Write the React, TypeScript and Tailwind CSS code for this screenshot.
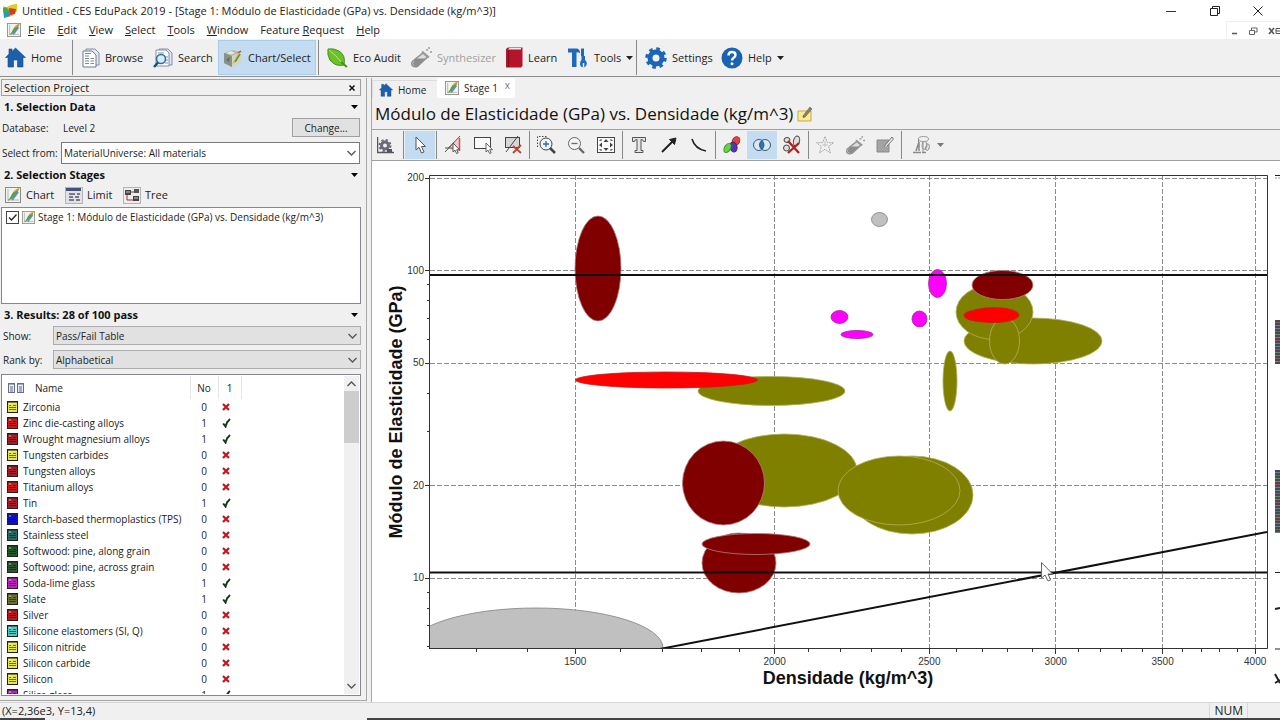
import type { ReactNode } from 'react';
import clsx from 'clsx';

const materials = [
  { name: 'Zirconia', color: '#e6e64a', pass: false },
  { name: 'Zinc die-casting alloys', color: '#d01818', pass: true },
  { name: 'Wrought magnesium alloys', color: '#a81c28', pass: true },
  { name: 'Tungsten carbides', color: '#e6e64a', pass: false },
  { name: 'Tungsten alloys', color: '#a81c28', pass: false },
  { name: 'Titanium alloys', color: '#d01818', pass: false },
  { name: 'Tin', color: '#a81c28', pass: true },
  { name: 'Starch-based thermoplastics (TPS)', color: '#1010c8', pass: false },
  { name: 'Stainless steel', color: '#2a6a60', pass: false },
  { name: 'Softwood: pine, along grain', color: '#1f5a22', pass: false },
  { name: 'Softwood: pine, across grain', color: '#2c5630', pass: false },
  { name: 'Soda-lime glass', color: '#c020c0', pass: true },
  { name: 'Slate', color: '#6c7030', pass: true },
  { name: 'Silver', color: '#c01818', pass: false },
  { name: 'Silicone elastomers (SI, Q)', color: '#50c8c0', pass: false },
  { name: 'Silicon nitride', color: '#e6e64a', pass: false },
  { name: 'Silicon carbide', color: '#e6e64a', pass: false },
  { name: 'Silicon', color: '#e6e64a', pass: false },
  { name: 'Silica glass', color: '#c020c0', pass: true },
];

const menus = [
  ['', 'F', 'ile'],
  ['', 'E', 'dit'],
  ['', 'V', 'iew'],
  ['', 'S', 'elect'],
  ['', 'T', 'ools'],
  ['', 'W', 'indow'],
  ['Feature ', 'R', 'equest'],
  ['', 'H', 'elp'],
];

/* ---------- icons ---------- */

const AppIcon = () => (
  <svg width="16" height="16" viewBox="0 0 16 16">
    <path d="M1 3Q4 5 7 3L15 1L15 8L10 13L2 15L1 10Z" fill="#e8c52c" />
    <path d="M8 2L15 1Q16 5 13 8L8 7Z" fill="#d8d028" />
    <path d="M1 5Q4 3 6 6L9 8L5 11L1 9Z" fill="#4ca64a" />
    <path d="M7 5L14 6L13 11L8 12Z" fill="#d63a20" />
    <path d="M2 9L8 9L8 13L2 15Z" fill="#2a9bb0" />
  </svg>
);

const ChartIcon = ({ size = 14 }: { size?: number }) => (
  <svg width={size} height={size} viewBox="0 0 16 16">
    <rect x="0.5" y="0.5" width="15" height="15" fill="#f2f2ee" stroke="#8a8a8a" />
    <path d="M3 2V13H14" stroke="#b8b8b8" fill="none" />
    <path d="M2 14Q5 12 7 7Q10 2 14 2Q13 6 10 9Q6 13 2 14Z" fill="#59a03c" />
    <path d="M7 13L13 5" stroke="#5b8fc0" strokeWidth="2" />
    <path d="M9 5L14 1" stroke="#e5a03a" strokeWidth="1.5" />
  </svg>
);

const HomeIcon = ({ size = 21 }: { size?: number }) => (
  <svg width={size} height={size} viewBox="0 0 21 21">
    <path d="M10.5 1L20.5 10.5H18V20H12.5V13H8.5V20H3V10.5H0.5L4 7V2H7V4.5Z" fill="#1c5fae" stroke="#174a88" strokeWidth="0.6" />
  </svg>
);

const BrowseIcon = () => (
  <svg width="18" height="20" viewBox="0 0 18 20">
    <path d="M4 1H13L17 5V17H4Z" fill="#e4e8f0" stroke="#8290a8" />
    <path d="M1 3H10L14 7V19H1Z" fill="#fff" stroke="#6d7a90" />
    <path d="M3 8H7M3 10.5H7M3 13H7M3 15.5H7M8.5 10.5H12M8.5 13H12M8.5 15.5H12M3 5.5H9" stroke="#7a869a" />
  </svg>
);

const SearchIcon = () => (
  <svg width="20" height="20" viewBox="0 0 20 20">
    <path d="M6 1H15L19 5V17H6Z" fill="#dfe4ee" stroke="#8290a8" />
    <path d="M3 2H13L16 5V18H3Z" fill="#fff" stroke="#8290a8" />
    <path d="M5 5H11M12 9H15M12 12H15M12 15H15" stroke="#8290a8" />
    <circle cx="8" cy="11" r="4.5" fill="#dcecf8" stroke="#2a6fb0" strokeWidth="1.6" />
    <path d="M5 14.5L1 19" stroke="#1a4f88" strokeWidth="2.5" />
  </svg>
);

const ChartSelectIcon = () => (
  <svg width="20" height="20" viewBox="0 0 20 20">
    <path d="M1 5L9 2L18 4L17 15L9 19L1 15Z" fill="#b4b8ac" />
    <path d="M1 5L9 8V19L1 15Z" fill="#8b918a" />
    <path d="M9 8L18 4V15L9 19Z" fill="#d4d6c4" />
    <path d="M3 12L7 9L6 14Z" fill="#527a52" />
    <path d="M10 16L15 6" stroke="#e0c440" strokeWidth="1.6" fill="none" />
    <path d="M12 14L17 6" stroke="#5c9450" strokeWidth="1.6" />
    <path d="M3 5L8 3L12 5L8 6.5Z" fill="#e6e8e0" />
    <path d="M15 5L18 3" stroke="#b84a36" strokeWidth="1.5" />
  </svg>
);

const LeafIcon = () => (
  <svg width="21" height="21" viewBox="0 0 21 21">
    <path d="M1 2Q7 1 12 4Q19 8 17 18Q8 20 3 13Q0 8 1 2Z" fill="#6cc02a" stroke="#46911c" />
    <path d="M2 3Q9 8 15 16" stroke="#b6e67a" fill="none" />
    <path d="M14 15L20 20" stroke="#46911c" strokeWidth="2" />
  </svg>
);

const TubeIcon = ({ size = 21 }: { size?: number }) => (
  <svg width={size} height={size} viewBox="0 0 21 21">
    <path d="M12 6L16.5 10L7 19Q3 21 1 18Q0 15 3 13Z" fill="#dedede" stroke="#8e8e8e" strokeWidth="1.5" />
    <path d="M5 11.5H14.5L7 18.5Q3 20 2 17Q2 14 5 11.5Z" fill="#8c8c8c" />
    <path d="M11 4.5L18 10.5" stroke="#9a9a9a" strokeWidth="2" />
    <path d="M15 3H17M19 5H21M18 0V2" stroke="#9a9a9a" strokeWidth="1.5" />
  </svg>
);

const BookIcon = () => (
  <svg width="18" height="21" viewBox="0 0 18 21">
    <path d="M1 2L3 0.5H17.5V19L16 20.5H1Z" fill="#b5152b" />
    <path d="M3 2.5L4.5 1H16V2.5Z" fill="#f5e8e8" />
    <path d="M3.5 3V20" stroke="#7d0d1c" />
  </svg>
);

const ToolsIcon = () => (
  <svg width="21" height="21" viewBox="0 0 21 21">
    <path d="M0 5.5V1.5H9Q12 2 12 6.5Q10 4.5 8.5 5.5V20H4V5.5Z" fill="#1f6ab8" />
    <path d="M13 1.5H16V9H17V13Q19.5 15 18.5 18Q17 20.5 15.5 20.5Q12 20 12 17Q12 14 13.5 13V9H13Z" fill="#1f6ab8" />
    <path d="M15.5 16V20.5" stroke="#f0f0f0" strokeWidth="1.5" />
  </svg>
);

const GearIcon = () => (
  <svg width="22" height="22" viewBox="0 0 22 22">
    <circle cx="11" cy="11" r="6" fill="none" stroke="#1c66b5" strokeWidth="5" />
    <circle cx="11" cy="11" r="9" fill="none" stroke="#1c66b5" strokeWidth="3.5" strokeDasharray="3.5 3.57" />
  </svg>
);

const HelpIcon = () => (
  <svg width="22" height="22" viewBox="0 0 22 22">
    <circle cx="11" cy="11" r="10.5" fill="#1c62b3" />
    <path d="M7.5 8.5Q7.5 5 11 5Q14.5 5 14.5 8Q14.5 10 12.5 11Q11 12 11 13.5" fill="none" stroke="#fff" strokeWidth="2.4" />
    <circle cx="11" cy="16.8" r="1.5" fill="#fff" />
  </svg>
);

const LimitIcon = () => (
  <svg width="18" height="17" viewBox="0 0 18 17">
    <rect x="0.5" y="0.5" width="17" height="16" fill="#e2e2e6" stroke="#b4b4b8" />
    <rect x="1" y="1" width="15" height="3" fill="#46507e" />
    <path d="M4 7H10M12 7H15M4 10H8M10 10H14M4 13H9M11 13H15" stroke="#555a70" strokeWidth="1.5" />
  </svg>
);

const TreeIcon = () => (
  <svg width="18" height="17" viewBox="0 0 18 17">
    <rect x="0.5" y="0.5" width="17" height="16" fill="#ededed" stroke="#b4b4b8" />
    <rect x="2" y="3" width="6" height="5" fill="#444" />
    <rect x="11" y="2" width="5" height="4" fill="#555" />
    <rect x="10" y="9" width="6" height="5" fill="#444" />
    <path d="M8 5H11M4 8V13H10" stroke="#a03030" fill="none" />
    <path d="M3 5H7M11 11H15" stroke="#ccc" />
  </svg>
);

const NoteIcon = () => (
  <svg width="16" height="16" viewBox="0 0 16 16">
    <path d="M1 5H14V15H1Z" fill="#f9ec98" stroke="#c8a93a" />
    <path d="M6 10L13 1L15 3L8 11L6 11.5Z" fill="#8c8468" stroke="#5a5240" strokeWidth="0.6" />
  </svg>
);

const PageIcon = () => (
  <svg width="7" height="10" viewBox="0 0 7 10">
    <rect x="0.5" y="0.5" width="6" height="9" fill="#e8ecf6" stroke="#666c84" />
    <path d="M0 1H7M2 4H5M2 6H5M2 8H5" stroke="#666c84" />
  </svg>
);

const RecordIcon = ({ color }: { color: string }) => (
  <svg width="11" height="12" viewBox="0 0 11 12" className="block shrink-0">
    <rect x="0.5" y="0.5" width="10" height="11" fill={color} stroke="#20201c" />
    <path d="M0 1H11" stroke="#20201c" />
    <path d="M2 4.5H4M6 4.5H9M2 6.5H9M2 8.5H9" stroke="#151515" strokeOpacity="0.6" />
    <path d="M2 3H4" stroke="#fff" strokeOpacity="0.7" />
  </svg>
);

const CheckMark = () => (
  <svg width="9" height="10" viewBox="0 0 9 10" className="block">
    <path d="M1.2 5.5L3.5 8.5Q4.5 4 8 1" fill="none" stroke="#153a1c" strokeWidth="2" />
  </svg>
);

const CrossMark = () => (
  <svg width="8" height="8" viewBox="0 0 8 8" className="block">
    <path d="M1 1L7 7M7 1L1 7" stroke="#c01824" strokeWidth="2.3" />
  </svg>
);

const Caret = ({ color = '#222' }: { color?: string }) => (
  <svg width="7" height="4" viewBox="0 0 7 4">
    <path d="M0 0H7L3.5 4Z" fill={color} />
  </svg>
);

const Chevron = ({ flip = false }: { flip?: boolean }) => (
  <svg width="9" height="6" viewBox="0 0 9 6" className={flip ? 'rotate-180' : ''}>
    <path d="M0.5 1L4.5 5L8.5 1" fill="none" stroke="#555" strokeWidth="1.3" />
  </svg>
);

/* ---------- chart toolbar glyphs, all on a 20px grid ---------- */

const Glyph = ({ children }: { children: ReactNode }) => (
  <svg width="20" height="20" viewBox="0 0 20 20" fill="none" stroke="#444">
    {children}
  </svg>
);

const pointer = 'M0 0V9L2 7.2L3.6 10.5L5.2 9.8L3.7 6.7H6.5Z';

const glyphs: Record<string, ReactNode> = {
  properties: (
    <Glyph>
      <path d="M0.5 2V17.5H17" stroke="#55555f" strokeWidth="1.5" />
      <circle cx="8" cy="10.5" r="3.5" stroke="#6a6a78" strokeWidth="3" />
      <circle cx="8" cy="10.5" r="5.5" stroke="#6a6a78" strokeWidth="2" strokeDasharray="2.2 2.12" />
      <path d="M10 17V14H15V17Z" fill="#55555f" stroke="none" />
    </Glyph>
  ),
  pointer: (
    <Glyph>
      <path d="M6 2V15L9 12.3L11.5 18L14 17L11.5 11.5H15.5Z" fill="#fff" stroke="#555" />
    </Glyph>
  ),
  gradient: (
    <Glyph>
      <path d="M4 13L16 3V17Z" fill="#f5c8cc" stroke="none" />
      <path d="M16.5 3V16" stroke="#d05060" strokeWidth="1.5" />
      <path d="M2 17L17 1M2 13H10" stroke="#555" />
      <path d="M5 13L12 6" stroke="#d05060" />
      <g transform="translate(10 8)"><path d={pointer} fill="#fff" stroke="#555" /></g>
    </Glyph>
  ),
  box: (
    <Glyph>
      <rect x="1.5" y="2.5" width="16" height="11" fill="#fafafa" />
      <g transform="translate(13 8)"><path d={pointer} fill="#fff" stroke="#555" strokeWidth="0.9" /></g>
    </Glyph>
  ),
  removeBox: (
    <Glyph>
      <rect x="2.5" y="2.5" width="14" height="10" fill="#d6d6d6" />
      <path d="M3 17L15 1" />
      <path d="M10 11L18 18M18 10L10 18" stroke="#b04a38" strokeWidth="1.8" />
    </Glyph>
  ),
  zoomIn: (
    <Glyph>
      <path d="M1.5 12V1.5H12" strokeDasharray="1.5 1.5" />
      <circle cx="10" cy="9" r="6" fill="#eef4f8" />
      <path d="M7 9H13M10 6V12" stroke="#2870a0" strokeWidth="1.3" />
      <path d="M14 13L19 18" strokeWidth="2.5" />
    </Glyph>
  ),
  zoomOut: (
    <Glyph>
      <circle cx="8.5" cy="8.5" r="6" fill="#f4f4f4" stroke="#666" />
      <path d="M5.5 8.5H11.5" stroke="#a05060" strokeWidth="1.3" />
      <path d="M13 13L18 18" stroke="#666" strokeWidth="2.3" />
    </Glyph>
  ),
  fit: (
    <Glyph>
      <rect x="1.5" y="2.5" width="17" height="15" fill="#fafafa" />
      <path d="M10 4L12.5 7H7.5ZM10 16L12.5 13H7.5ZM3 10L6 7.5V12.5ZM17 10L14 7.5V12.5Z" fill="#444" stroke="none" />
      <path d="M4 6V5H6M14 5H16V6M4 14V15H6M14 15H16V14" />
    </Glyph>
  ),
  text: (
    <Glyph>
      <path d="M3.5 2.5H16.5V6.5H14.5Q14.5 4.5 12 4.5V15.5H14V17.5H6V15.5H8V4.5Q5.5 4.5 5.5 6.5H3.5Z" fill="#e4e4e4" stroke="#555" />
    </Glyph>
  ),
  arrow: (
    <Glyph>
      <path d="M3 17L13 7" stroke="#222" strokeWidth="2" />
      <path d="M17 3L15.5 9.5L10.5 4.5Z" fill="#222" stroke="#222" />
    </Glyph>
  ),
  curve: (
    <Glyph>
      <path d="M3 4Q6 14 17 16" stroke="#222" strokeWidth="1.6" />
    </Glyph>
  ),
  families: (
    <Glyph>
      <ellipse cx="14" cy="6" rx="3.5" ry="4.5" fill="#e8403c" stroke="#a03030" transform="rotate(30 14 6)" />
      <ellipse cx="11.5" cy="12" rx="3.5" ry="5" fill="#5238b0" stroke="#38287a" transform="rotate(-15 11.5 12)" />
      <ellipse cx="5.5" cy="13" rx="3" ry="5" fill="#62d648" stroke="#3c8c30" transform="rotate(30 5.5 13)" />
    </Glyph>
  ),
  intersect: (
    <Glyph>
      <circle cx="7" cy="10" r="5.5" fill="#d8e8f6" stroke="#44586c" />
      <circle cx="13" cy="10" r="5.5" fill="#d8e8f6" stroke="#44586c" />
      <path d="M10 5.4Q14 10 10 14.6Q6 10 10 5.4Z" fill="#2a78b4" stroke="#23608f" />
    </Glyph>
  ),
  hideFailed: (
    <Glyph>
      <ellipse cx="5" cy="5" rx="3" ry="2.5" fill="#ddd" />
      <ellipse cx="4.5" cy="13" rx="3" ry="3" fill="#ddd" />
      <ellipse cx="14.5" cy="6" rx="3" ry="5" fill="#ddd" transform="rotate(15 14.5 6)" />
      <path d="M6 6L17 18M17 8L6 18" stroke="#b02020" strokeWidth="2.3" />
    </Glyph>
  ),
  star: (
    <Glyph>
      <path d="M10 1.5L12.3 7.7H18.5L13.6 11.5L15.5 18L10 14.2L4.5 18L6.4 11.5L1.5 7.7H7.7Z" stroke="#aaa" strokeDasharray="2 0.7" fill="#f2f2f2" />
      <path d="M10 6V12M7 10H13" stroke="#c2c2c2" />
    </Glyph>
  ),
  tube: <TubeIcon size={19} />,
  edit: (
    <Glyph>
      <path d="M2 5H14V17H2Z" fill="#a4a4a4" stroke="#8a8a8a" />
      <path d="M9 12L12 8L17 2L18.5 4L12 11" fill="#eee" stroke="#777" />
    </Glyph>
  ),
  report: (
    <Glyph>
      <path d="M4 16L7 7V16M1 17.5H9M10 17.5H14" stroke="#8a8a8a" strokeWidth="1.5" />
      <ellipse cx="11.5" cy="4" rx="5" ry="2.5" stroke="#999" />
      <path d="M6.5 4V8M11 7V17M15 9Q18 8 17 14Q15 17 13 14Z" stroke="#8a8a8a" />
      <ellipse cx="12.5" cy="10.5" rx="2.5" ry="4" stroke="#999" />
    </Glyph>
  ),
};

const glyphGroups: { id: string; label: string; active?: boolean }[][] = [
  [{ id: 'properties', label: 'Chart properties' }],
  [{ id: 'pointer', label: 'Pointer', active: true }],
  [
    { id: 'gradient', label: 'Gradient line' },
    { id: 'box', label: 'Box selection' },
    { id: 'removeBox', label: 'Remove selection' },
  ],
  [
    { id: 'zoomIn', label: 'Zoom in' },
    { id: 'zoomOut', label: 'Zoom out' },
    { id: 'fit', label: 'Fit to window' },
  ],
  [
    { id: 'text', label: 'Add text' },
    { id: 'arrow', label: 'Add arrow' },
    { id: 'curve', label: 'Add curve' },
  ],
  [
    { id: 'families', label: 'Show families' },
    { id: 'intersect', label: 'Result intersection', active: true },
    { id: 'hideFailed', label: 'Hide failed' },
  ],
  [
    { id: 'star', label: 'Favourites' },
    { id: 'tube', label: 'Synthesize' },
    { id: 'edit', label: 'Edit record' },
  ],
];

/* ---------- bubble chart ---------- */

// log scales of the plot area
const xPos = (v: number) => 575.3 + Math.log10(v / 1500) * 1596;
const yPos = (v: number) => 578.3 - Math.log10(v / 10) * 307.5;

const xMajor = [1500, 2000, 2500, 3000, 3500, 4000];
const yMajor = [10, 20, 50, 100, 200];
const xMinor = Array.from({ length: 28 }, (_, i) => 1300 + i * 100).filter((v) => !xMajor.includes(v));
const yMinor = [6, 7, 8, 9, 30, 40, 60, 70, 80, 90];

const OLIVE = '#808000';
const MAROON = '#800000';
const RED = '#ff0000';
const PINK = '#ff00ff';
const SILVER = '#c0c0c0';

// [cx, cy, rx, ry, fill]
const bubbles: [number, number, number, number, string][] = [
  [536, 648, 127, 40, SILVER],
  [598, 268.5, 23, 52.5, MAROON],
  [771.5, 391, 73.5, 14.5, OLIVE],
  [666.5, 380, 91, 8, RED],
  [784.5, 470.5, 72.5, 36.5, OLIVE],
  [723.5, 483, 41, 42, MAROON],
  [912, 495, 61, 39, OLIVE],
  [899, 490.5, 61, 34.5, OLIVE],
  [739, 563, 37, 30, MAROON],
  [756, 544, 54, 10.5, MAROON],
  [879.5, 219.5, 8, 7, SILVER],
  [839.5, 317, 8.5, 6.5, PINK],
  [857, 334.5, 16, 4, PINK],
  [919.5, 319, 7.5, 8, PINK],
  [937.5, 283.5, 9, 14, PINK],
  [1033, 341, 69, 23, OLIVE],
  [994.5, 312, 38.5, 27.5, OLIVE],
  [1004.5, 341, 15, 23, OLIVE],
  [1002.5, 285, 30.5, 14.5, MAROON],
  [985, 315.5, 21, 6.5, RED],
  [994, 315, 25, 7.5, RED],
  [950, 381, 7, 30, OLIVE],
];

const outline: Record<string, string> = {
  [OLIVE]: '#b0b060',
  [MAROON]: '#b08080',
  [RED]: '#c02020',
  [PINK]: '#903090',
  [SILVER]: '#808080',
};

const BubbleChart = () => (
  <svg viewBox="372 161 908 541" preserveAspectRatio="xMinYMin meet" className="block h-full w-full" role="img" aria-label="Módulo de Elasticidade (GPa) vs. Densidade (kg/m^3)">
    <defs>
      <clipPath id="plot">
        <rect x="430" y="175" width="837" height="474" />
      </clipPath>
      <pattern id="stripes" width="5" height="9" patternUnits="userSpaceOnUse">
        <rect width="5" height="9" fill="#4a4a4e" />
        <rect width="5" height="1" y="1" fill="#6a8a70" />
        <rect width="5" height="1" y="4" fill="#707ca0" />
        <rect width="5" height="1" y="7" fill="#8a5a60" />
      </pattern>
    </defs>

    <g stroke="#8c8c8c" strokeDasharray="5 2" shapeRendering="crispEdges">
      {xMajor.map((v) => <line key={v} x1={xPos(v)} x2={xPos(v)} y1="175" y2="649" />)}
      {yMajor.map((v) => <line key={v} x1="430" x2="1267" y1={yPos(v)} y2={yPos(v)} />)}
    </g>

    <g stroke="#333" shapeRendering="crispEdges">
      {xMajor.map((v) => <line key={v} x1={xPos(v)} x2={xPos(v)} y1="649" y2="654" />)}
      {xMinor.map((v) => <line key={v} x1={xPos(v)} x2={xPos(v)} y1="649" y2="652" />)}
      {yMajor.map((v) => <line key={v} x1="425" x2="430" y1={yPos(v)} y2={yPos(v)} />)}
      {yMinor.map((v) => <line key={v} x1="427" x2="430" y1={yPos(v)} y2={yPos(v)} />)}
    </g>

    <g clipPath="url(#plot)">
      {bubbles.map(([cx, cy, rx, ry, fill]) => (
        <ellipse key={`${cx}-${cy}`} cx={cx} cy={cy} rx={rx} ry={ry} fill={fill} stroke={outline[fill]} strokeWidth="0.8" />
      ))}
      <line x1="660" y1="649" x2="1267" y2="532" stroke="#111" strokeWidth="2" />
    </g>

    <path d="M429.5 649V175.5H1267.5V648.5H429.5" fill="none" stroke="#333" />
    <g stroke="#111" strokeWidth="2">
      <line x1="430" x2="1267" y1="275" y2="275" />
      <line x1="430" x2="1267" y1="572.5" y2="572.5" />
    </g>

    <g className="font-['Liberation_Sans'] text-[10px]" fill="#333">
      {xMajor.map((v) => <text key={v} x={xPos(v)} y="665" textAnchor="middle">{v}</text>)}
      {yMajor.map((v) => <text key={v} x="424" y={yPos(v) + 3} textAnchor="end">{v}</text>)}
    </g>
    <g className="font-['Liberation_Sans'] text-[18px] font-bold" fill="#111" textAnchor="middle">
      <text x="848" y="684">Densidade (kg/m^3)</text>
      <text transform="translate(402 412) rotate(-90)">Módulo de Elasticidade (GPa)</text>
    </g>

    {/* edge of the next view */}
    <rect x="1275" y="320" width="5" height="44" fill="url(#stripes)" />
    <rect x="1275" y="470" width="5" height="63" fill="url(#stripes)" />
    <path d="M1275 175.5H1280M1275 572.5H1280M1275 649H1280" stroke="#222" />
    <path d="M1275 178H1280" stroke="#999" strokeDasharray="2 1" />
    <path d="M1275 609L1280 608M1275 674L1280 683M1275 683L1280 680" stroke="#222" strokeWidth="2" />

    <path d="M1041.5 562.5V578L1045 575L1048 581L1050.5 580L1048 574H1052.5Z" fill="#fff" stroke="#666" />
  </svg>
);

/* ---------- shell ---------- */

const Separator = () => <span className="w-px self-stretch bg-[#888]" />;

const ToolButton = ({ icon, label, className, caret, disabled }: { icon: ReactNode; label: string; className?: string; caret?: boolean; disabled?: boolean }) => (
  <button disabled={disabled} className={clsx('flex items-center gap-[5px] whitespace-nowrap disabled:text-[#a0a0a0]', className)}>
    {icon}
    <span>{label}</span>
    {caret && <Caret />}
  </button>
);

const SectionHeading = ({ children }: { children: ReactNode }) => (
  <div className="flex h-[22px] items-center justify-between pl-[3px] pr-[3px] text-[11px]">
    <h2 className="font-bold text-[#111]">{children}</h2>
    <Caret color="#000" />
  </div>
);

const SelectBox = ({ id, value, className }: { id: string; value: string; className?: string }) => (
  <div className="relative flex-1">
    <select id={id} defaultValue={value} className={clsx('block w-full appearance-none border pl-[2px] outline-none', className)}>
      <option>{value}</option>
    </select>
    <span className="pointer-events-none absolute inset-y-0 right-[4px] flex items-center">
      <Chevron />
    </span>
  </div>
);

const SelectionProject = () => (
  <aside className="mb-px flex w-[367px] shrink-0 flex-col border-b border-r border-[#a8a8a8] pl-px pr-[5px] pt-px text-[10px]">
    <div className="flex h-[17px] items-center justify-between border border-[#a0a0a0] pl-[2px] pr-[5px] text-[11px]">
      <span>Selection Project</span>
      <button aria-label="Close panel">
        <svg width="6" height="6" viewBox="0 0 6 6"><path d="M0.5 0.5L5.5 5.5M5.5 0.5L0.5 5.5" stroke="#111" strokeWidth="1.5" /></svg>
      </button>
    </div>

    <SectionHeading>1. Selection Data</SectionHeading>
    <div className="flex h-[19px] items-center pl-px">
      <span className="w-[61px]">Database:</span>
      <span>Level 2</span>
      <button className="ml-auto mr-px h-full w-[68px] border border-[#a0a0a0] bg-[#e1e1e1]">Change...</button>
    </div>
    <div className="mt-[5px] flex items-center pl-px pr-px">
      <label htmlFor="subset" className="w-[59px] whitespace-nowrap">Select from:</label>
      <SelectBox id="subset" value="MaterialUniverse: All materials" className="h-[22px] border-[#7a7a7a] bg-white" />
    </div>

    <SectionHeading>2. Selection Stages</SectionHeading>
    <div className="flex h-[18px] items-center pl-[4px] text-[11px]">
      <button className="flex w-[60px] items-center gap-[5px]"><ChartIcon size={16} />Chart</button>
      <button className="flex w-[58px] items-center gap-[4px]"><LimitIcon />Limit</button>
      <button className="flex items-center gap-[4px]"><TreeIcon />Tree</button>
    </div>
    <div className="mt-[3px] h-[97px] border border-[#828790] bg-white">
      <label className="flex h-[18px] items-center gap-[3px] pl-[4px]">
        <span className="relative flex">
          <input type="checkbox" defaultChecked className="peer h-[13px] w-[13px] appearance-none border border-[#444] bg-white" />
          <svg width="13" height="13" viewBox="0 0 13 13" className="pointer-events-none absolute inset-0 opacity-0 peer-checked:opacity-100">
            <path d="M3 6.5L5.5 9L10.5 3.5" fill="none" stroke="#222" strokeWidth="1.3" />
          </svg>
        </span>
        <ChartIcon size={13} />
        Stage 1: Módulo de Elasticidade (GPa) vs. Densidade (kg/m^3)
      </label>
    </div>

    <SectionHeading>3. Results: 28 of 100 pass</SectionHeading>
    <div className="flex items-center pl-[2px]">
      <label htmlFor="show" className="w-[50px]">Show:</label>
      <SelectBox id="show" value="Pass/Fail Table" className="h-[19px] border-[#adadad] bg-[#e1e1e1]" />
    </div>
    <div className="mt-[5px] flex items-center pl-[2px]">
      <label htmlFor="rank" className="w-[50px]">Rank by:</label>
      <SelectBox id="rank" value="Alphabetical" className="h-[19px] border-[#adadad] bg-[#e1e1e1]" />
    </div>

    <div className="mb-[4px] mt-[5px] flex min-h-0 flex-1 border border-[#828790] bg-white p-px">
      <div className="min-w-0 flex-1 overflow-hidden">
        <table className="w-[238px] table-fixed border-collapse">
          <colgroup>
            <col className="w-[187px]" />
            <col className="w-[28px]" />
            <col className="w-[23px]" />
          </colgroup>
          <thead>
            <tr className="h-[23px]">
              <th className="border-r border-[#e5e5e5] p-0 text-left font-normal">
                <span className="flex items-center gap-[2px] pl-[5px]">
                  <PageIcon />
                  <PageIcon />
                  <span className="pl-[9px]">Name</span>
                </span>
              </th>
              <th className="border-r border-[#e5e5e5] p-0 font-normal">No</th>
              <th className="border-r border-[#e5e5e5] p-0 font-normal">1</th>
            </tr>
          </thead>
          <tbody>
            {materials.map((m) => (
              <tr key={m.name} className="h-[16px] leading-[16px]">
                <td className="p-0">
                  <span className="flex items-center gap-[5px] whitespace-nowrap pl-[4px]">
                    <RecordIcon color={m.color} />
                    {m.name}
                  </span>
                </td>
                <td className="p-0 text-center">{m.pass ? 1 : 0}</td>
                <td className="p-0 pl-[4px]">{m.pass ? <CheckMark /> : <CrossMark />}</td>
              </tr>
            ))}
          </tbody>
        </table>
      </div>
      <div className="flex w-[15px] flex-col items-center bg-[#f0f0f0]">
        <span className="flex h-[15px] items-center"><Chevron flip /></span>
        <span className="h-[52px] w-full bg-[#cdcdcd]" />
        <span className="mt-auto flex h-[16px] items-center"><Chevron /></span>
      </div>
    </div>
  </aside>
);

const App = () => {
  return (
    <div className="flex h-screen flex-col overflow-hidden bg-[#f0f0f0] font-['Open_Sans',sans-serif] text-[11px] leading-4 text-[#222]">
      <header className="bg-white">
        <div className="flex h-[21px] items-center justify-between pl-[2px] pr-[17px]">
          <div className="flex items-center gap-[4px]">
            <AppIcon />
            <h1>Untitled - CES EduPack 2019 - [Stage 1: Módulo de Elasticidade (GPa) vs. Densidade (kg/m^3)]</h1>
          </div>
          <div className="flex items-center gap-[33px]">
            <button aria-label="Minimize"><svg width="11" height="10"><path d="M0 5.5H10" stroke="#333" /></svg></button>
            <button aria-label="Restore">
              <svg width="10" height="10" fill="none" stroke="#222"><path d="M0.5 2.5H7.5V9.5H0.5ZM2.5 2V0.5H9.5V7.5H8" /></svg>
            </button>
            <button aria-label="Close"><svg width="10" height="10" stroke="#222"><path d="M0.5 0.5L9.5 9.5M9.5 0.5L0.5 9.5" /></svg></button>
          </div>
        </div>
        <div className="flex h-[18px] items-center justify-between">
          <nav className="flex items-center gap-[12px] pl-[7px]">
            <ChartIcon />
            {menus.map(([before, key, after]) => (
              <button key={after} className="whitespace-pre first-of-type:-ml-[5px]">
                {before}<u>{key}</u>{after}
              </button>
            ))}
          </nav>
          <div className="flex h-full items-center gap-[10px] border-l border-t border-[#eee] pl-[4px]">
            <button aria-label="Minimize chart"><svg width="8" height="8"><path d="M1 6.5H6" stroke="#555" strokeWidth="1.5" /></svg></button>
            <button aria-label="Restore chart">
              <svg width="9" height="8" fill="none" stroke="#666"><path d="M0.5 3.5H5.5V7.5H0.5ZM2.5 3V1H8V5H6" /></svg>
            </button>
            <button aria-label="Close chart">
              <svg width="12" height="8" stroke="#555" fill="none"><path d="M1 1L6 7M6 1L1 7" strokeWidth="1.6" /><path d="M12 1.5H8V6.5H12M8 4H12" /></svg>
            </button>
          </div>
        </div>
      </header>

      <div className="flex h-[38px] items-stretch border-b border-[#8c8c8c] py-px">
        <ToolButton icon={<HomeIcon />} label="Home" className="w-[72px] pl-[5px]" />
        <Separator />
        <ToolButton icon={<BrowseIcon />} label="Browse" className="w-[80px] pl-[9px]" />
        <ToolButton icon={<SearchIcon />} label="Search" className="w-[65px]" />
        <ToolButton icon={<ChartSelectIcon />} label="Chart/Select" className="w-[98px] border border-[#a8cbe8] bg-[#c4dcf2] pl-[4px]" />
        <span className="w-[2px]" />
        <Separator />
        <ToolButton icon={<LeafIcon />} label="Eco Audit" className="w-[92px] pl-[8px]" />
        <ToolButton icon={<TubeIcon />} label="Synthesizer" disabled className="w-[94px]" />
        <ToolButton icon={<BookIcon />} label="Learn" className="w-[63px]" />
        <ToolButton icon={<ToolsIcon />} label="Tools" caret className="w-[68px]" />
        <Separator />
        <ToolButton icon={<GearIcon />} label="Settings" className="w-[84px] pl-[8px]" />
        <ToolButton icon={<HelpIcon />} label="Help" caret />
      </div>

      <div className="flex min-h-0 flex-1 pt-px">
        <SelectionProject />

        <main className="ml-[4px] flex min-w-0 flex-1 flex-col border-l border-[#a8a8a8]">
          <div className="flex h-[20px] items-end text-[10px]">
            <button className="flex h-[18px] w-[65px] items-center gap-[5px] border-l border-t border-[#dcdcdc] pl-[6px]">
              <HomeIcon size={14} />
              Home
            </button>
            <button className="flex h-[20px] w-[78px] items-center gap-[5px] bg-white pl-[8px]">
              <ChartIcon size={14} />
              Stage 1
              <span className="mb-[6px] ml-auto pr-[5px] text-[#777]">x</span>
            </button>
          </div>
          <div className="flex h-[32px] items-center gap-[4px] border-b border-[#a0a0a0] pl-[3px]">
            <h2 className="whitespace-nowrap text-[17px] leading-6 text-[#111]">Módulo de Elasticidade (GPa) vs. Densidade (kg/m^3)</h2>
            <button aria-label="Edit title"><NoteIcon /></button>
          </div>
          <div className="flex h-[31px] items-stretch border-b border-[#a0a0a0] py-px">
            {glyphGroups.map((group) => (
              <div key={group[0].id} className="flex">
                {group.map((g) => (
                  <button key={g.id} aria-label={g.label} className={clsx('flex w-[30px] items-center justify-center', g.active && 'bg-[#c4dcf2]')}>
                    {glyphs[g.id]}
                  </button>
                ))}
                <span className="mx-px w-px bg-[#888]" />
              </div>
            ))}
            <button aria-label="Report" className="flex items-center gap-[5px] pl-[9px]">
              {glyphs.report}
              <Caret color="#777" />
            </button>
          </div>
          <div className="min-h-0 flex-1 bg-white">
            <BubbleChart />
          </div>
        </main>
      </div>

      <footer className="shrink-0">
        <div className="flex h-[16px] items-center justify-between border-t border-[#d8d8d8] pl-[2px] pr-[32px]">
          <span>(X=2,36e3, Y=13,4)</span>
          <span className="border-x border-[#d8d8d8] px-[4px] text-[12px]">NUM</span>
        </div>
        <div className="flex h-[2px]">
          <span className="w-[45px] bg-[#444]" />
          <span className="w-[322px]" />
          <span className="flex-1 bg-[#444]" />
        </div>
      </footer>
    </div>
  );
};

export default App;
